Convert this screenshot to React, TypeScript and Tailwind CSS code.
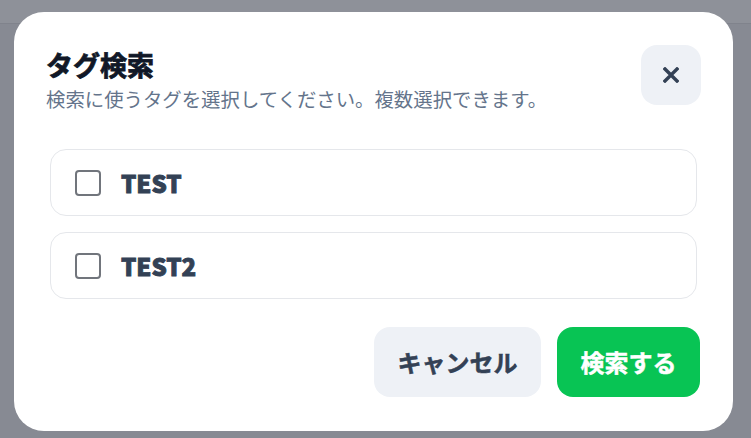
import { useState } from "react";

const tags = ["TEST", "TEST2"];

export default function App() {
  const [selected, setSelected] = useState<string[]>([]);

  const toggle = (tag: string) => {
    setSelected((prev) => (prev.includes(tag) ? prev.filter((t) => t !== tag) : [...prev, tag]));
  };

  return (
    <div
      className="relative h-screen w-full overflow-hidden bg-[#878a93]"
      style={{ fontFamily: '"Noto Sans CJK JP", "Noto Sans", sans-serif' }}
    >
      <div className="h-6 border-b border-[#80838c] bg-[#8e9199]" />

      {/* modal */}
      <div className="fixed inset-0 pl-[14px] pt-[12px]">
        <div className="flex w-[719px] flex-col rounded-[30px] bg-white pb-[34px] pl-[32px] pr-[32px] pt-[33px]">
          <div className="flex items-start justify-between">
            <div className="pt-[3px]">
              <h1 className="text-[27px] font-bold leading-[34px] text-[#111827] [-webkit-text-stroke:0.8px]">
                タグ検索
              </h1>
              <p className="mt-1 text-[19.4px] leading-[26px] text-[#64748b]">
                検索に使うタグを選択してください。複数選択できます。
              </p>
            </div>
            <button className="flex h-[60px] w-[60px] items-center justify-center rounded-2xl bg-[#eef1f6] text-[#334155]">
              <svg width="16" height="16" viewBox="0 0 16 16" fill="none">
                <path d="M2 2L14 14M14 2L2 14" stroke="currentColor" strokeWidth="3.4" strokeLinecap="square" />
              </svg>
            </button>
          </div>

          <div className="ml-1 mr-1 mt-[37px] flex flex-col gap-4">
            {tags.map((tag) => (
              <label
                key={tag}
                className="flex h-[67px] cursor-pointer items-center gap-5 rounded-2xl border border-[#e5e7eb] pl-6"
              >
                <input
                  type="checkbox"
                  className="hidden"
                  checked={selected.includes(tag)}
                  onChange={() => toggle(tag)}
                />
                <span className="h-[26px] w-[26px] rounded-[4px] border-2 border-[#71757c] bg-white" />
                <span className="text-[24px] font-black leading-none text-[#334155] [-webkit-text-stroke:0.9px]">
                  {tag}
                </span>
              </label>
            ))}
          </div>

          <div className="mr-px mt-[28px] flex justify-end gap-4">
            <button className="h-[70px] w-[167px] rounded-2xl bg-[#eef1f6] text-[24px] font-bold text-[#334155] [-webkit-text-stroke:0.5px]">
              キャンセル
            </button>
            <button className="h-[70px] w-[143px] rounded-2xl bg-[#08c454] text-[24px] font-bold text-white [-webkit-text-stroke:0.5px]">
              検索する
            </button>
          </div>
        </div>
      </div>
    </div>
  );
}
